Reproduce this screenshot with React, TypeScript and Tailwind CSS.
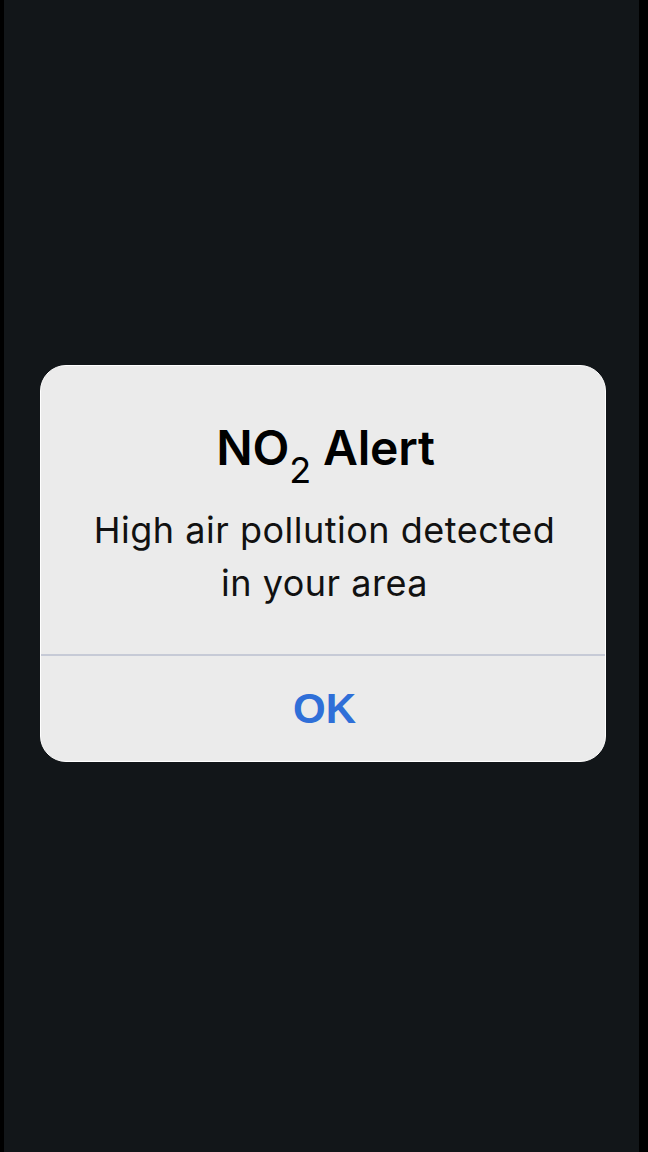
import React from "react";

const App = () => {
  return (
    <div className="w-[648px] h-[1152px] bg-black flex">
      <div
        className="ml-[4px] w-[635px] h-full bg-[#121619] flex flex-col items-center pt-[365px]"
        style={{ fontFamily: "Inter, 'Liberation Sans', Arial, sans-serif" }}
      >
        <div className="ml-[2px] w-[566px] h-[397px] bg-[#ebebeb] rounded-[26px] border border-white flex flex-col overflow-hidden">
          <div className="h-[288px] flex flex-col items-center pt-[52px]">
            <h1 className="text-[48px] leading-[60px] font-semibold text-black tracking-[-0.2px] pl-[6px]">
              NO<sub className="text-[36px] font-normal align-[-9px]">2</sub> Alert
            </h1>
            <p className="mt-[26px] text-[36px] leading-[53px] text-center text-[#111] tracking-[0.5px] pl-[4px]">
              High air pollution detected
              <br />
              in your area
            </p>
          </div>
          <div className="h-[2px] bg-[#c6cad6]" />
          <button className="flex-1 flex items-center justify-center text-[42px] font-bold text-[#2f6fd8] pl-[4px]" style={{ fontFamily: "'Liberation Sans', Arial, sans-serif" }}>
            OK
          </button>
        </div>
      </div>
    </div>
  );
};

export default App;
